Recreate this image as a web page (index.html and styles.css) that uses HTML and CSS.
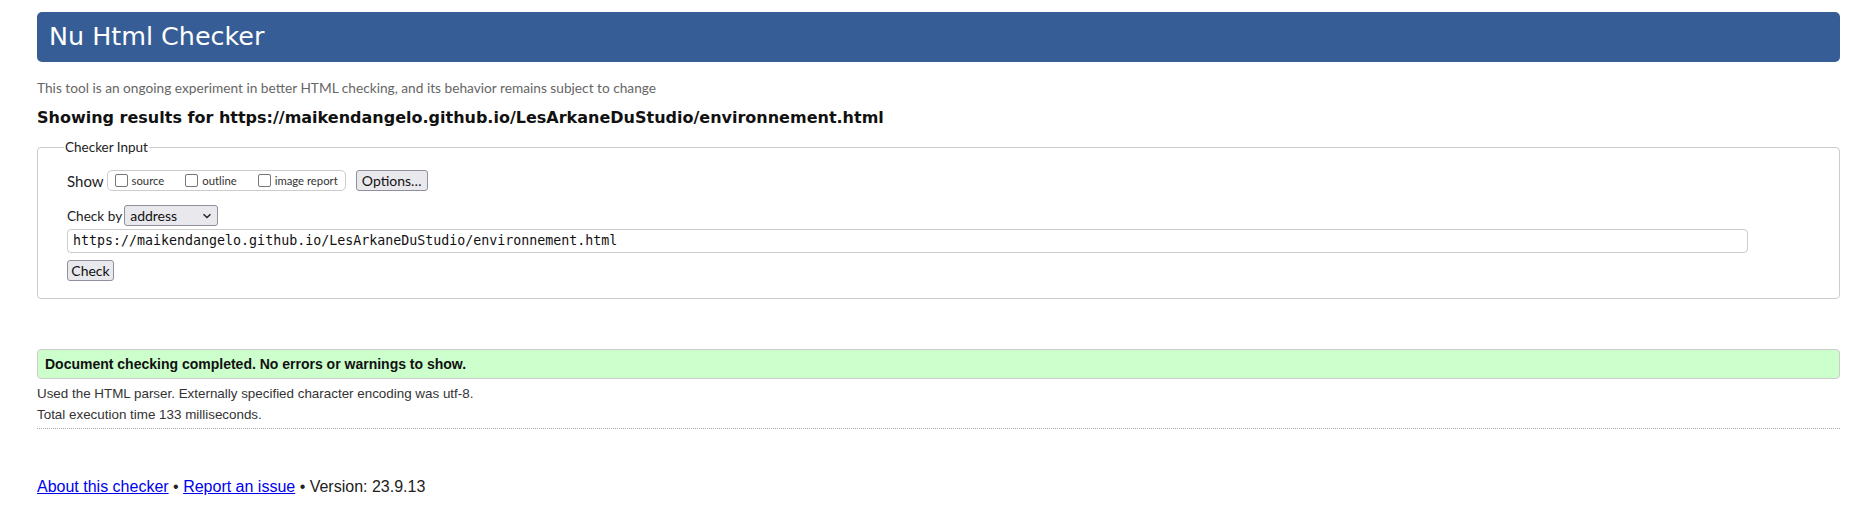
FILE: index.html
```html
<!DOCTYPE html>
<html lang="en">
<head>
<meta charset="utf-8">
<title>Nu Html Checker</title>
<link rel="stylesheet" href="styles.css">
</head>
<body>
<div class="page">
  <h1 class="banner">Nu Html Checker</h1>
  <p class="tagline">This tool is an ongoing experiment in better HTML checking, and its behavior remains subject to change</p>
  <h2 class="results-title">Showing results for https://maikendangelo.github.io/LesArkaneDuStudio/environnement.html</h2>
  <fieldset class="checker">
    <legend class="legend">Checker Input</legend>
    <div class="row show-row">
      <span class="label">Show</span>
      <div class="show-group">
        <label class="opt"><span class="box"></span>source</label>
        <label class="opt"><span class="box"></span>outline</label>
        <label class="opt"><span class="box"></span>image report</label>
      </div>
      <button class="btn options">Options…</button>
    </div>
    <div class="row by-row">
      <span class="label">Check by</span>
      <div class="select">address<svg class="chev" width="10" height="6" viewBox="0 0 10 6"><path d="M1.5 1.2 L5 4.6 L8.5 1.2" fill="none" stroke="#222" stroke-width="1.4"/></svg></div>
    </div>
    <div class="url">https://maikendangelo.github.io/LesArkaneDuStudio/environnement.html</div>
    <button class="btn check">Check</button>
  </fieldset>
  <div class="success">Document checking completed. No errors or warnings to show.</div>
  <p class="details first">Used the HTML parser. Externally specified character encoding was utf-8.</p>
  <p class="details">Total execution time 133 milliseconds.</p>
  <hr class="sep">
  <p class="footer"><a href="#">About this checker</a> • <a href="#">Report an issue</a> • Version: 23.9.13</p>
</div>
</body>
</html>
```
FILE: styles.css
```css
html, body {
  margin: 0;
  padding: 0;
  background: #fff;
}
.page {
  padding: 12px 19px 0 37px;
  font-family: "Liberation Sans", Arial, sans-serif;
  color: #222;
}
.banner {
  margin: 0;
  height: 50px;
  box-sizing: border-box;
  background: #365d95;
  color: #fff;
  border-radius: 5px;
  font-family: "DejaVu Sans", sans-serif;
  font-weight: normal;
  font-size: 25.4px;
  line-height: 48px;
  padding: 0 0 0 12px;
}
.tagline {
  margin: 18px 0 0 0;
  font-family: "Lato", sans-serif;
  font-size: 13.7px;
  line-height: 16px;
  color: #666;
}
.results-title {
  margin: 12px 0 0 0;
  font-family: "DejaVu Sans", sans-serif;
  font-weight: bold;
  font-size: 16px;
  line-height: 20px;
  color: #111;
}
.checker {
  margin: 11px 0 0 0;
  border: 1px solid #ccc;
  border-radius: 4px;
  padding: 0 29px 17px 29px;
  min-width: 0;
}
.legend {
  font-family: "Lato", sans-serif;
  font-size: 13.5px;
  color: #222;
  padding: 0 1px;
  margin-left: -3px;
}
.row {
  display: flex;
  align-items: center;
  font-family: "Lato", sans-serif;
  white-space: nowrap;
}
.show-row {
  margin-top: 15px;
  height: 21px;
}
.label {
  font-size: 15px;
  color: #222;
}
.show-row .label {
  margin-right: 3px;
}
.show-group {
  display: flex;
  align-items: center;
  gap: 21px;
  height: 21px;
  box-sizing: border-box;
  border: 1px solid #ccc;
  border-radius: 5px;
  padding: 0 7px 0 7px;
  font-size: 11.3px;
  color: #333;
}
.opt {
  display: flex;
  align-items: center;
  gap: 4px;
}
.box {
  display: inline-block;
  width: 11px;
  height: 11px;
  border: 1px solid #767676;
  border-radius: 2px;
  background: #fff;
}
.btn {
  font-family: "Lato", sans-serif;
  background: #e9e9ed;
  border: 1px solid #8f8f9d;
  border-radius: 3px;
  color: #111;
  padding: 0;
  height: 21px;
  font-size: 14px;
  white-space: nowrap;
}
.options {
  margin-left: 10px;
  width: 72px;
}
.by-row {
  margin-top: 14px;
  height: 21px;
}
.by-row .label {
  font-size: 13.6px;
  margin-right: 2px;
}
.select {
  display: flex;
  align-items: center;
  justify-content: space-between;
  width: 94px;
  height: 21px;
  box-sizing: border-box;
  border: 1px solid #8f8f9d;
  border-radius: 3px;
  background: #e9e9ed;
  padding: 0 5px 0 5px;
  font-size: 14px;
  color: #111;
}
.url {
  margin-top: 3px;
  height: 24px;
  box-sizing: border-box;
  border: 1px solid #ccc;
  border-radius: 4px;
  margin-right: 62px;
  padding: 0 5px;
  font-family: "DejaVu Sans Mono", monospace;
  font-size: 13.3px;
  line-height: 22px;
  color: #111;
  white-space: nowrap;
}
.check {
  margin-top: 7px;
  width: 47px;
  display: block;
}
.success {
  margin-top: 50px;
  height: 30px;
  box-sizing: border-box;
  background: #ccffcc;
  border: 1px solid #ccc;
  border-radius: 4px;
  padding: 0 7px;
  font-weight: bold;
  font-size: 14px;
  line-height: 28px;
  color: #111;
}
.details {
  margin: 0;
  font-size: 13.4px;
  line-height: 21px;
  color: #333;
}
.details.first {
  margin-top: 4px;
}
.sep {
  margin: 3px 0 0 0;
  border: 0;
  border-top: 1px dotted #aaa;
  height: 0;
}
.footer {
  margin: 48px 0 0 0;
  font-size: 16px;
  line-height: 20px;
  color: #222;
}
.footer a {
  color: #0000ee;
}
```
